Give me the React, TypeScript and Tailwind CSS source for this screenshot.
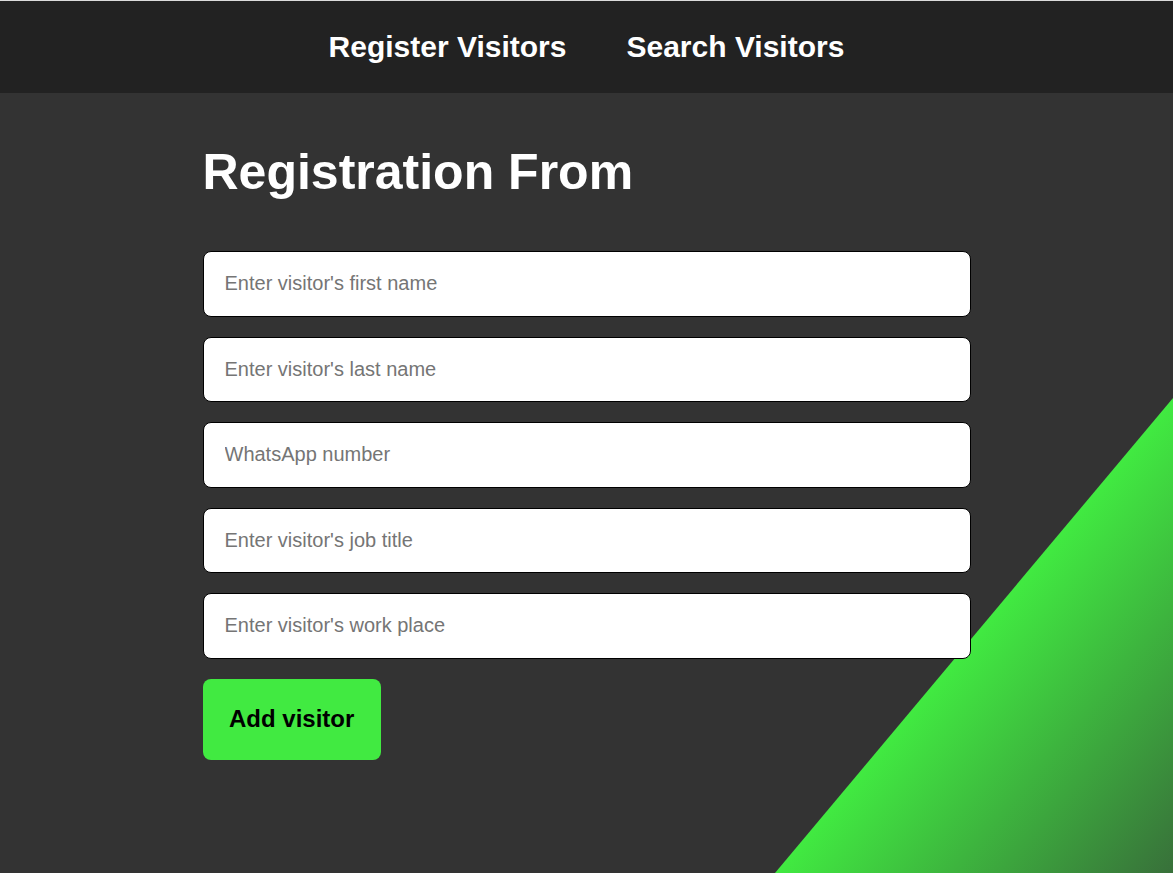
import { useState } from "react";

const fields = [
  { id: "firstName", placeholder: "Enter visitor's first name" },
  { id: "lastName", placeholder: "Enter visitor's last name" },
  { id: "whatsapp", placeholder: "WhatsApp number" },
  { id: "jobTitle", placeholder: "Enter visitor's job title" },
  { id: "workPlace", placeholder: "Enter visitor's work place" },
];

export default function App() {
  const [formData, setFormData] = useState<Record<string, string>>({});

  const handleChange = (e: React.ChangeEvent<HTMLInputElement>) => {
    setFormData({ ...formData, [e.target.id]: e.target.value });
  };

  const handleSubmit = (e: React.FormEvent) => {
    e.preventDefault();
  };

  return (
    <div className="relative min-h-screen overflow-hidden bg-[#333333] font-['Liberation_Sans',Arial,sans-serif]">
      {/* green corner decoration */}
      <div className="absolute bottom-0 right-0 h-[475px] w-[398px] bg-[linear-gradient(130deg,#41ea41_50%,#38703a_100%)] [clip-path:polygon(100%_0,100%_100%,0_100%)]" />

      <nav className="relative flex h-[93px] items-center justify-center gap-[60px] border-t border-[#dcdcdc] bg-[#222222] pb-[2px]">
        <a href="#" className="text-[30px] font-bold text-white">
          Register Visitors
        </a>
        <a href="#" className="text-[30px] font-bold text-white">
          Search Visitors
        </a>
      </nav>

      <main className="relative mx-auto w-[768px] pt-[51px]">
        <h1 className="mb-[50px] text-[50px] font-bold leading-[57px] text-white">
          Registration From
        </h1>
        <form onSubmit={handleSubmit} className="flex flex-col items-start gap-5">
          {fields.map((f) => (
            <input
              key={f.id}
              id={f.id}
              type="text"
              placeholder={f.placeholder}
              value={formData[f.id] || ""}
              onChange={handleChange}
              className="h-[65.5px] w-full rounded-lg border border-black bg-white px-[21px] text-[20px] text-black placeholder:text-[#757575] focus:outline-none"
            />
          ))}
          <button
            type="submit"
            className="h-[81px] rounded-lg bg-[#41ea41] px-[26.5px] text-[24px] font-bold text-black"
          >
            Add visitor
          </button>
        </form>
      </main>
    </div>
  );
}
